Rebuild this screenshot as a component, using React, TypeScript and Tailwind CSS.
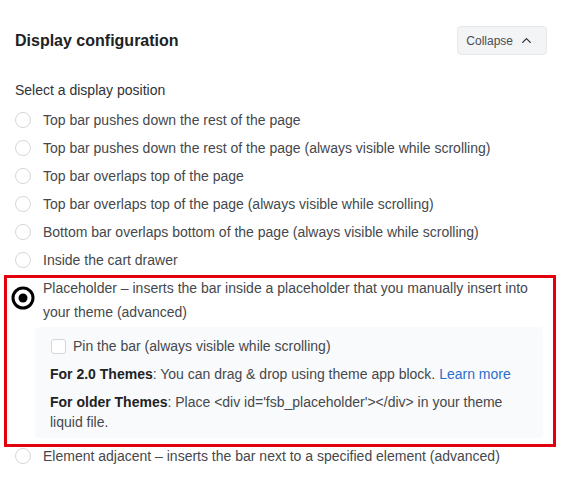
import { ChevronUp } from 'lucide-react';

const options = [
  'Top bar pushes down the rest of the page',
  'Top bar pushes down the rest of the page (always visible while scrolling)',
  'Top bar overlaps top of the page',
  'Top bar overlaps top of the page (always visible while scrolling)',
  'Bottom bar overlaps bottom of the page (always visible while scrolling)',
  'Inside the cart drawer',
];

function Radio() {
  return (
    <span className="w-[24px] flex justify-center">
      <span className="w-[16px] h-[16px] rounded-full border border-[#d3d6da] bg-white" />
    </span>
  );
}

function OptionRow({ label }: { label: string }) {
  return (
    <label className="flex items-center gap-[8px] -ml-[4px] h-[28px] text-[14px] text-[#45484c]">
      <Radio />
      <span>{label}</span>
    </label>
  );
}

export default function App() {
  return (
    <div className="min-h-screen bg-white pl-[15px] pr-[17px] pt-[26px] font-['Liberation_Sans',Arial,sans-serif]">
      {/* Header */}
      <div className="flex items-center justify-between h-[29px]">
        <h2 className="text-[16px] font-bold text-[#202223]">Display configuration</h2>
        <button className="flex items-center gap-[6px] h-[29px] pl-[8px] pr-[12px] rounded-[4px] border border-[#e6e8eb] bg-[#f3f4f6] text-[12px] text-[#4a4d52]">
          Collapse
          <ChevronUp className="w-[15px] h-[15px] text-[#303236]" strokeWidth={2.2} />
        </button>
      </div>

      <p className="mt-[25px] h-[20px] leading-[20px] text-[14px] text-[#303236]">Select a display position</p>

      <div className="mt-[6px] flex flex-col">
        {options.map((o) => (
          <OptionRow key={o} label={o} />
        ))}

        {/* Placeholder (selected) */}
        <div className="relative mt-[2px]">
          <div className="flex gap-[8px] -ml-[4px]">
            <span className="w-[24px] flex justify-center pt-[10px] shrink-0">
              <svg width="24" height="24" viewBox="0 0 24 24" className="-ml-[1px]">
                <circle cx="12" cy="12" r="10" fill="white" stroke="black" strokeWidth="3" />
                <circle cx="12" cy="12" r="4.5" fill="black" />
              </svg>
            </span>
            <span className="text-[14px] leading-[24px] text-[#45484c]">
              Placeholder – inserts the bar inside a placeholder that you manually insert into your theme (advanced)
            </span>
          </div>

          <div className="mt-[3px] ml-[20px] mr-[4px] rounded-[4px] bg-[#f9fafb] pl-[16px] pr-[12px] pt-[10px] pb-[6px] text-[14px] text-[#45484c]">
            <label className="flex items-center gap-[7px] h-[16px] mt-[1px]">
              <span className="w-[15px] h-[15px] rounded-[3px] border border-[#d3d6da] bg-white" />
              <span>Pin the bar (always visible while scrolling)</span>
            </label>
            <p className="mt-[10px] leading-[20px] -ml-[1px]">
              <b className="font-bold text-[#202223]">For 2.0 Themes</b>: You can drag &amp; drop using theme app block.{' '}
              <a className="text-[#2c6ecb]">Learn more</a>
            </p>
            <p className="mt-[8px] leading-[20px] -ml-[1px]">
              <b className="font-bold text-[#202223]">For older Themes</b>: Place &lt;div id='fsb_placeholder'&gt;&lt;/div&gt; in your theme liquid file.
            </p>
          </div>

          {/* annotation outline */}
          <div className="pointer-events-none absolute -top-[1px] -left-[11px] -right-[9px] -bottom-[9px] border-[3px] border-[#e2000f]" />
        </div>

        <div className="mt-[4px]">
          <OptionRow label="Element adjacent – inserts the bar next to a specified element (advanced)" />
        </div>
      </div>
    </div>
  );
}
